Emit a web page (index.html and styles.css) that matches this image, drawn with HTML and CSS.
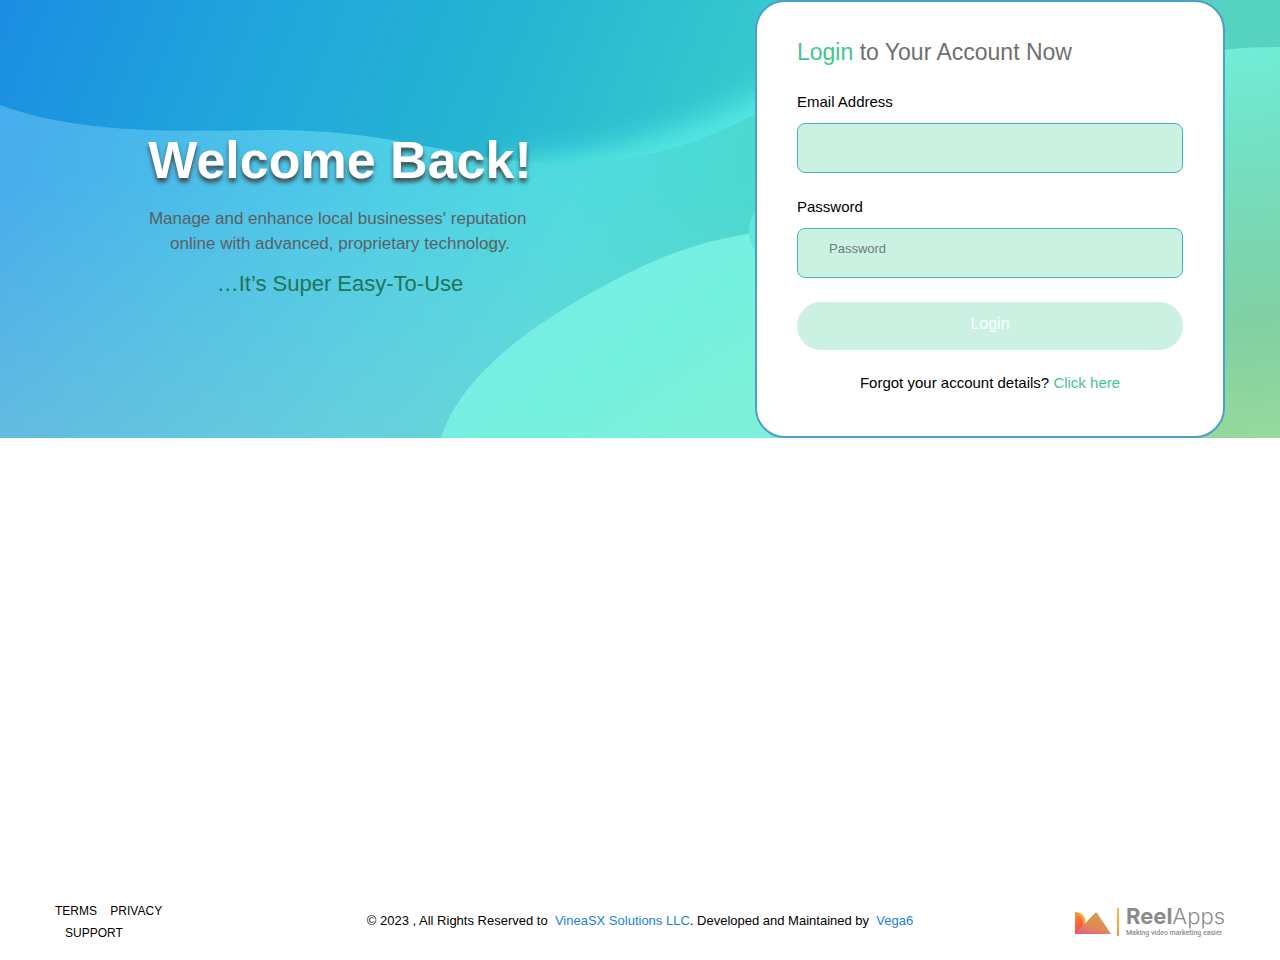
FILE: index.html
```
<!DOCTYPE html>
<html lang="en">
<head>
  <meta charset="UTF-8">
  <meta name="viewport" content="width=device-width, initial-scale=1.0">
  <title>Login</title>
  <link rel="stylesheet" href="styles.css">
</head>
<body>

  <main class="hero">
    <svg class="hero-bg" viewBox="0 0 1280 438" preserveAspectRatio="none" aria-hidden="true">
      <defs>
        <linearGradient id="base" gradientUnits="userSpaceOnUse" x1="0" y1="200" x2="740" y2="330">
          <stop offset="0" stop-color="#47adec"/>
          <stop offset="0.5" stop-color="#4dcee7"/>
          <stop offset="0.75" stop-color="#4fdbde"/>
          <stop offset="1" stop-color="#4ad9cf"/>
        </linearGradient>
        <linearGradient id="haze" x1="0" y1="0" x2="0" y2="1">
          <stop offset="0.4" stop-color="#9ad0c8" stop-opacity="0"/>
          <stop offset="1" stop-color="#9ad0c8" stop-opacity="0.32"/>
        </linearGradient>
        <linearGradient id="top" gradientUnits="userSpaceOnUse" x1="0" y1="0" x2="660" y2="270">
          <stop offset="0" stop-color="#1b8de2"/>
          <stop offset="0.3" stop-color="#1fa2dc"/>
          <stop offset="0.7" stop-color="#26b6d2"/>
          <stop offset="1" stop-color="#36c8ce"/>
        </linearGradient>
        <linearGradient id="blob" gradientUnits="userSpaceOnUse" x1="570" y1="270" x2="680" y2="438">
          <stop offset="0" stop-color="#78ece4"/>
          <stop offset="0.5" stop-color="#74f1df"/>
          <stop offset="1" stop-color="#7cf0d8"/>
        </linearGradient>
        <linearGradient id="right" gradientUnits="userSpaceOnUse" x1="1220" y1="40" x2="1280" y2="438">
          <stop offset="0" stop-color="#70eed8"/>
          <stop offset="0.3" stop-color="#74dfc2"/>
          <stop offset="0.7" stop-color="#80d0a3"/>
          <stop offset="1" stop-color="#97d99c"/>
        </linearGradient>
        <linearGradient id="drop" x1="0" y1="0" x2="1" y2="1">
          <stop offset="0" stop-color="#5fe4e4"/>
          <stop offset="1" stop-color="#3cc0c4"/>
        </linearGradient>
        <filter id="soft" x="-20%" y="-50%" width="140%" height="200%">
          <feGaussianBlur stdDeviation="14"/>
        </filter>
        <clipPath id="waveClip">
          <path d="M0 0H830V60C790 100 730 130 690 143C640 160 590 166 540 163C450 157 390 131 280 130C200 130 90 138 0 105Z"/>
        </clipPath>
      </defs>
      <rect width="1280" height="438" fill="url(#base)"/>
      <rect width="1280" height="438" fill="url(#haze)"/>
      <g clip-path="url(#waveClip)">
        <rect width="840" height="170" fill="url(#top)"/>
        <path d="M500 184C620 178 740 146 850 60" fill="none" stroke="#52e8e2" stroke-width="44" filter="url(#soft)"/>
      </g>
      <path d="M441 438C462 370 545 318 600 288C660 255 705 238 770 231V438Z" fill="url(#blob)"/>
      <ellipse cx="778" cy="231" rx="29" ry="32" fill="#5ee8d8"/>
      <path d="M770 400H1280V438H770Z" fill="#7fe8c4"/>
      <path d="M1180 0H1280V80H1180Z" fill="#56d2c0"/>
      <path d="M1180 56Q1240 46 1280 47V438H1180Z" fill="url(#right)"/>
      <path d="M478 241Q482 232 489 232Q496 238 496 245Q492 251 486 251Q479 248 478 241Z" fill="url(#drop)" opacity="0.7"/>
    </svg>

    <div class="container hero-row">
      <div class="welcome">
        <h1>Welcome Back!</h1>
        <p class="lead">Manage and enhance local businesses' reputation&nbsp;<br>online with advanced, proprietary technology.</p>
        <p class="tagline">…It’s Super Easy-To-Use</p>
      </div>

      <form class="login-box">
        <h2><span>Login</span> to Your Account Now</h2>
        <label for="email">Email Address</label>
        <input type="email" id="email" name="email">
        <label for="password">Password</label>
        <input type="password" id="password" name="password" placeholder="Password">
        <button type="submit" class="login-btn">Login</button>
        <p class="forgot">Forgot your account details? <a href="#">Click here</a></p>
      </form>
    </div>
  </main>

  <footer>
    <div class="container footer-row">
      <ul class="footer-links">
        <li><a href="#">TERMS</a></li>
        <li><a href="#">PRIVACY</a></li>
        <li><a href="#">SUPPORT</a></li>
      </ul>
      <p class="copyright">© 2023 , All Rights Reserved to &nbsp;<a href="#">VineaSX Solutions LLC</a>. Developed and Maintained by &nbsp;<a href="#">Vega6</a></p>
      <a href="#" class="logo">
        <svg width="44" height="30" viewBox="0 0 44 30" aria-hidden="true">
          <defs>
            <linearGradient id="leaf" x1="0" y1="0" x2="0.4" y2="1">
              <stop offset="0" stop-color="#f9a028"/>
              <stop offset="0.55" stop-color="#f4683c"/>
              <stop offset="1" stop-color="#ec5550"/>
            </linearGradient>
            <linearGradient id="peak" x1="0.7" y1="0" x2="0.2" y2="1">
              <stop offset="0" stop-color="#cfa04e"/>
              <stop offset="0.6" stop-color="#e08a55"/>
              <stop offset="1" stop-color="#e2608c"/>
            </linearGradient>
            <linearGradient id="bar" x1="0" y1="0" x2="0" y2="1">
              <stop offset="0" stop-color="#f8bd3b"/>
              <stop offset="1" stop-color="#f29a35"/>
            </linearGradient>
          </defs>
          <path d="M0 5C7 5 12 11 10 18L5 27H0Z" fill="#f9a12b"/>
          <path d="M0 5Q11 11 8 27H0Z" fill="url(#leaf)"/>
          <path d="M0 27L20 6Q21 5 22 6L36 27Z" fill="url(#peak)"/>
          <rect x="42" y="1" width="2" height="28" fill="url(#bar)"/>
        </svg>
        <span class="logo-text">
          <span class="logo-name"><b>Reel</b>Apps</span>
          <span class="logo-sub">Making video marketing easier</span>
        </span>
      </a>
    </div>
  </footer>

</body>
</html>
```
FILE: styles.css
```
* {
  margin: 0;
  padding: 0;
  box-sizing: border-box;
}

body {
  min-height: 100vh;
  display: flex;
  flex-direction: column;
  font-family: Helvetica, "Liberation Sans", Arial, sans-serif;
  font-size: 15px;
  line-height: 25px;
  color: #000;
  background: #fff;
}

a {
  text-decoration: none;
}

.container {
  width: 100%;
  max-width: 1200px;
  margin: 0 auto;
  padding: 0 15px;
}

/* hero */
.hero {
  position: relative;
  overflow: hidden;
}

.hero-bg {
  position: absolute;
  top: 0;
  left: 0;
  width: 100%;
  height: 100%;
}

.hero-row {
  position: relative;
  display: grid;
  grid-template-columns: 570px 470px;
  justify-content: space-between;
  align-items: center;
}

.welcome {
  padding-bottom: 10px;
  text-align: center;
}

.welcome h1 {
  font-size: 52px;
  line-height: 60px;
  color: #fff;
  text-shadow: 0 4px 4px rgba(60, 60, 60, 0.9);
}

.lead {
  margin-top: 16px;
  font-size: 17px;
  color: #5c5f62;
}

.tagline {
  margin-top: 14px;
  font-size: 22px;
  line-height: 28px;
  color: #20755a;
}

/* login form */
.login-box {
  display: flex;
  flex-direction: column;
  padding: 34px 40px 41px;
  background: #fff;
  border: 2px solid #4a9fcb;
  border-radius: 30px;
}

.login-box h2 {
  margin-bottom: 20px;
  font-size: 23px;
  font-weight: 400;
  line-height: 32px;
  color: #6f6f6f;
}

.login-box h2 span,
.forgot a {
  color: #43c590;
}

.login-box label {
  line-height: 28px;
  margin-bottom: 7px;
}

.login-box input {
  width: 100%;
  height: 50px;
  margin-bottom: 20px;
  padding: 0 31px 10px;
  font: inherit;
  font-size: 13px;
  background: #cbf1e2;
  border: 1px solid #42b4c2;
  border-radius: 8px;
}

.login-box input::placeholder {
  color: #6c7f79;
}

.login-btn {
  height: 48px;
  margin: 4px 0 20px;
  padding-bottom: 6px;
  font: inherit;
  font-size: 16px;
  color: #fff;
  background: #cbf1e2;
  border: 0;
  border-radius: 24px;
  cursor: pointer;
}

.forgot {
  text-align: center;
}

/* footer */
footer {
  margin-top: auto;
  padding-bottom: 16px;
}

.footer-row {
  display: grid;
  grid-template-columns: 150px 1fr 150px;
  align-items: center;
}

.footer-links {
  width: 120px;
  list-style: none;
  font-size: 12px;
  line-height: 22px;
}

.footer-links li {
  display: inline-block;
  margin-left: 10px;
}

.footer-links li:first-child {
  margin-left: 0;
}

.footer-links a {
  color: #000;
}

.copyright {
  padding-bottom: 3px;
  text-align: center;
  font-size: 13px;
}

.copyright a {
  color: #1a7fdc;
}

.logo {
  display: flex;
  align-items: center;
  gap: 7px;
  color: #8b8b8b;
}

.logo svg {
  flex: none;
}

.logo-text {
  display: flex;
  flex-direction: column;
  padding-bottom: 2px;
  font-family: Inter, sans-serif;
  white-space: nowrap;
}

.logo-name {
  font-size: 22px;
  font-weight: 300;
  line-height: 24px;
}

.logo-name b {
  font-weight: 700;
}

.logo-sub {
  font-family: Roboto, sans-serif;
  font-size: 7px;
  font-weight: 500;
  line-height: 10px;
}

@media (max-width: 1100px) {
  .hero-row {
    grid-template-columns: minmax(0, 470px);
    justify-content: center;
    gap: 30px;
    padding-top: 30px;
  }

  .footer-row {
    grid-template-columns: 1fr;
    justify-items: center;
    gap: 12px;
  }
}
```
